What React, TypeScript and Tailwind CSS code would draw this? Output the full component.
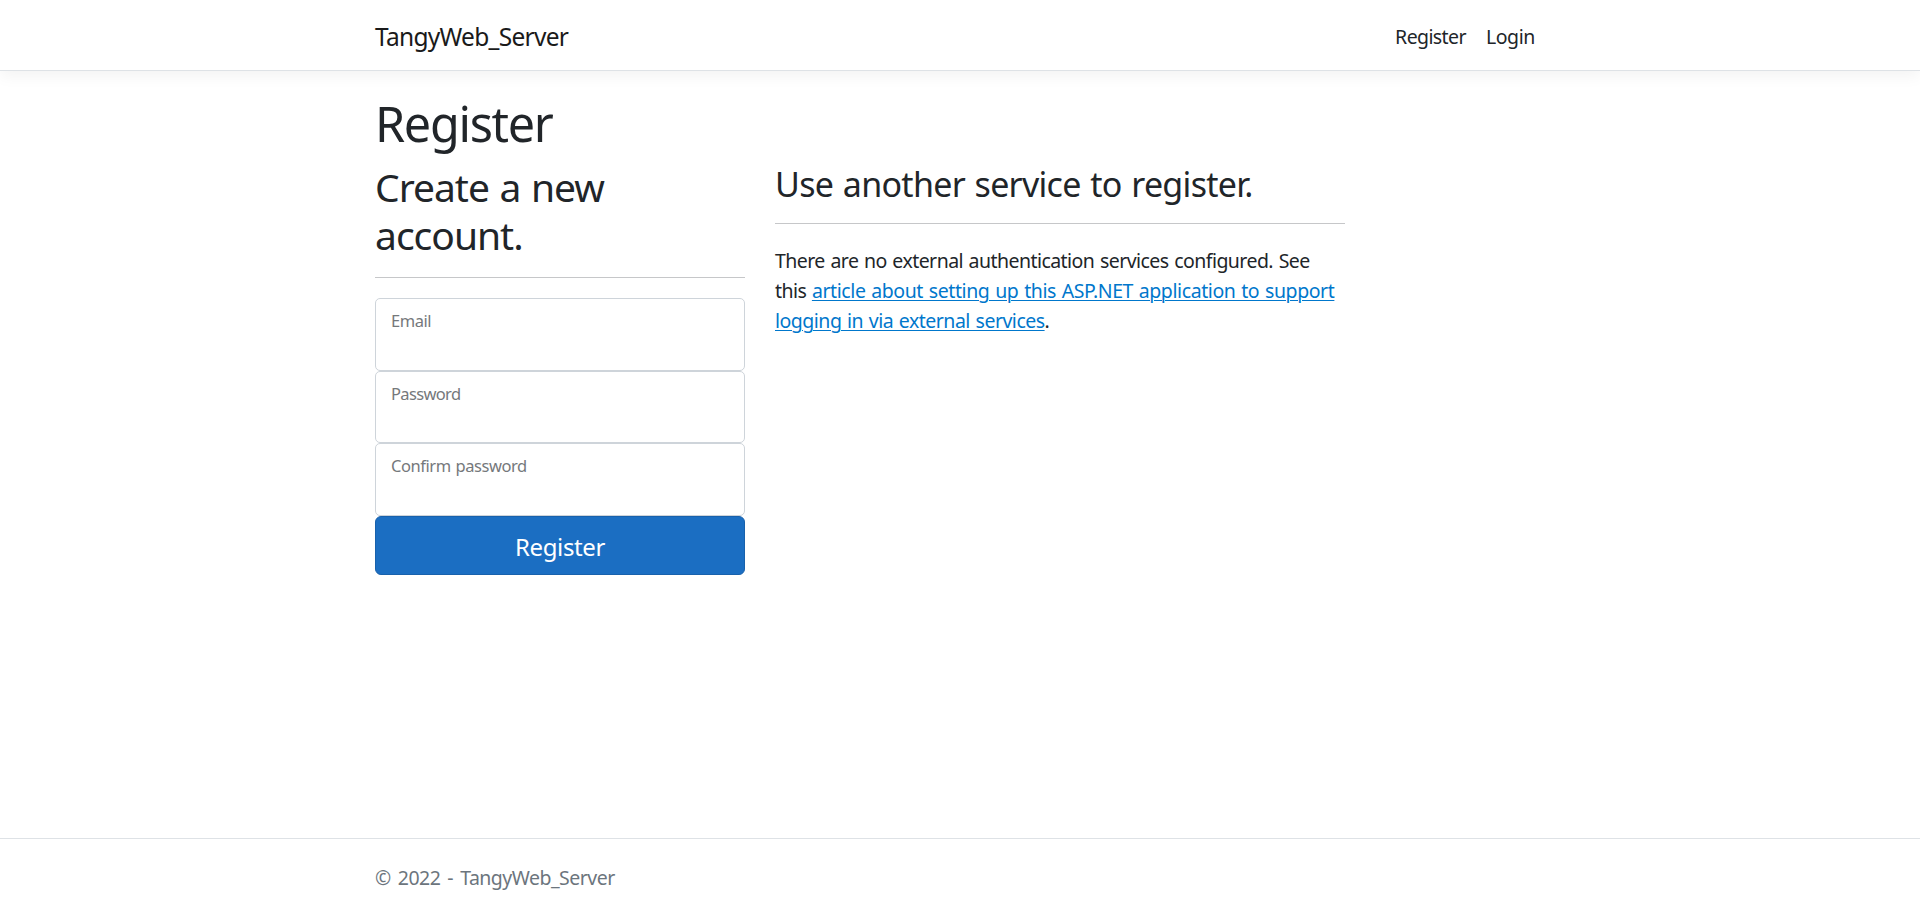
type FieldProps = { id: string; label: string; type: string; labelClass: string };

function Field({ id, label, type, labelClass }: FieldProps) {
  return (
    <div className="grid h-[72.5px]">
      <input
        id={id}
        type={type}
        className="col-start-1 row-start-1 h-[72.5px] w-full rounded-[5px] border border-[#ced4da] bg-white px-4 pt-6 outline-none"
      />
      <label
        htmlFor={id}
        className={`pointer-events-none col-start-1 row-start-1 self-start pl-4 pt-[11px] text-[16.5px] leading-[24px] text-[#75787b] ${labelClass}`}
      >
        {label}
      </label>
    </div>
  );
}

export default function App() {
  return (
    <div className="flex h-screen flex-col overflow-hidden bg-white font-['Noto_Sans',sans-serif] text-[19.5px] leading-[30px] text-[#212529]">
      <header className="h-[71px] shrink-0 border-b border-[#dee2e6] shadow-[0_5px_15px_rgba(0,0,0,0.05)]">
        <nav className="mx-auto flex h-[72px] w-[1170px] items-center justify-between">
          <a href="#" className="pt-0.5 text-[24.5px] leading-[38px] tracking-[-0.72px] text-[#1a1a1a]">
            TangyWeb_Server
          </a>
          <ul className="flex gap-[20px] pr-[10px] pt-0.5 text-[19.5px]">
            <li>
              <a href="#" className="tracking-[-0.6px]">Register</a>
            </li>
            <li>
              <a href="#" className="tracking-[-0.4px]">Login</a>
            </li>
          </ul>
        </nav>
      </header>

      <main className="mx-auto w-[1170px] grow pt-[20px]">
        <h1 className="h-[70px] pt-[2px] text-[48.5px] leading-[60px] tracking-[-1.3px]">Register</h1>
        <div className="flex gap-[30px]">
          <section className="w-[370px]">
            <h2 className="h-[116px] pt-[2px] text-[39px] leading-[48px]">
              <span className="block tracking-[-1px] [word-spacing:1.4px]">Create a new</span>
              <span className="block tracking-[-1px]">account.</span>
            </h2>
            <hr className="mb-[20.25px] border-[#c6c7c9]" />
            <form>
              <Field id="email" label="Email" type="email" labelClass="tracking-[-0.45px]" />
              <Field id="password" label="Password" type="password" labelClass="tracking-[-0.65px]" />
              <Field id="confirm" label="Confirm password" type="password" labelClass="tracking-[-0.45px] [word-spacing:1px]" />
              <button
                type="button"
                className="block h-[59.5px] w-full rounded-[6px] border border-[#1861ac] bg-[#1b6ec2] pt-[2px] text-[24px] leading-[37.5px] tracking-[-0.4px] text-white"
              >
                Register
              </button>
            </form>
          </section>
          <section className="w-[570px]">
            <h3 className="h-[62px] whitespace-nowrap pt-[2px] text-[34px] leading-[42px] tracking-[-0.7px] [word-spacing:1.4px]">
              Use another service to register.
            </h3>
            <hr className="mb-[22px] border-[#c6c7c9]" />
            <p className="whitespace-nowrap tracking-[-0.55px] [word-spacing:1.1px]">
              There are no external authentication services configured. See
              <br />
              this{" "}
              <a href="#" className="text-[#0077cc] underline decoration-1 underline-offset-2">
                <span className="tracking-[-0.41px]">
                  article about setting up this ASP.NET application to support
                </span>
                <br />
                <span className="tracking-[-0.5px]">logging in via external services</span>
              </a>
              .
            </p>
          </section>
        </div>
      </main>

      <footer className="h-[75px] shrink-0 border-t border-[#dee2e6] text-[#6c757d]">
        <div className="mx-auto w-[1170px] pt-[24px] tracking-[-0.52px] [word-spacing:2.5px]">© 2022 - TangyWeb_Server</div>
      </footer>
    </div>
  );
}
